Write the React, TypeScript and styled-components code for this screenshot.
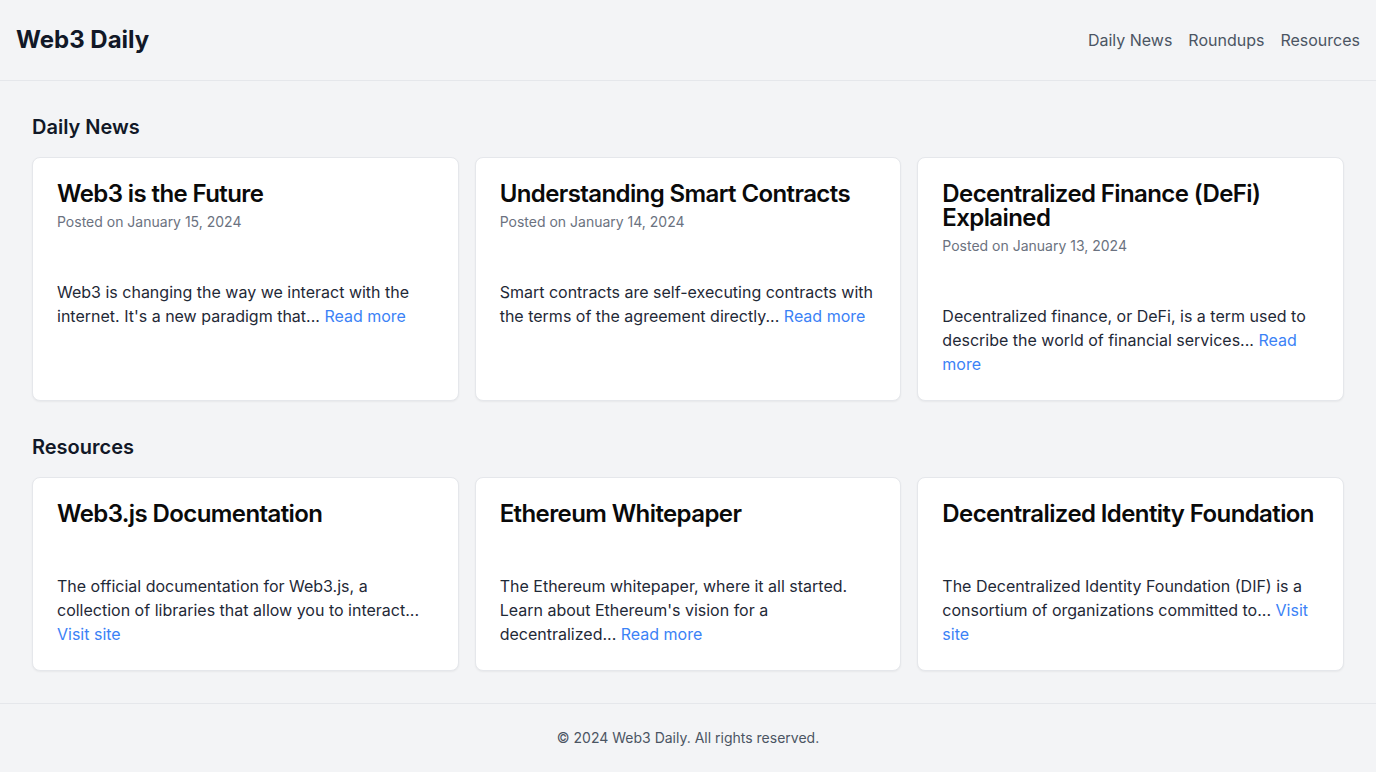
import React from "react";
import styled, { createGlobalStyle } from "styled-components";

const GlobalStyle = createGlobalStyle`
  * { box-sizing: border-box; }
  html, body { margin: 0; padding: 0; }
  body {
    background: #f3f4f6;
    font-family: Inter, "Noto Sans", "Liberation Sans", sans-serif;
    color: #1f2937;
  }
`;

const Page = styled.div`
  min-height: 100vh;
  display: flex;
  flex-direction: column;
`;

const Header = styled.header`
  height: 81px;
  display: flex;
  align-items: center;
  justify-content: space-between;
  padding: 0 16px;
  border-bottom: 1px solid #e5e7eb;
`;

const Brand = styled.h1`
  margin: 0;
  font-size: 24px;
  line-height: 32px;
  font-weight: 700;
  color: #111827;
`;

const Nav = styled.nav`
  display: flex;
  gap: 16px;
`;

const NavLink = styled.a`
  font-size: 16px;
  line-height: 24px;
  color: #4b5563;
  text-decoration: none;
`;

const Main = styled.main`
  flex: 1;
  padding: 32px;
  display: flex;
  flex-direction: column;
  gap: 32px;
`;

const Section = styled.section`
  display: flex;
  flex-direction: column;
`;

const SectionTitle = styled.h2`
  margin: 0 0 16px;
  font-size: 20px;
  line-height: 28px;
  font-weight: 600;
  color: #111827;
`;

const Grid = styled.div`
  display: grid;
  grid-template-columns: repeat(3, 1fr);
  gap: 16px;
`;

const Card = styled.article`
  background: #ffffff;
  border: 1px solid #e5e7eb;
  border-radius: 8px;
  box-shadow: 0 1px 2px rgba(0, 0, 0, 0.05);
  padding: 24px;
  display: flex;
  flex-direction: column;
`;

const CardHeader = styled.div`
  display: flex;
  flex-direction: column;
  gap: 6px;
`;

const CardTitle = styled.h3`
  margin: 0;
  font-size: 24px;
  line-height: 24px;
  font-weight: 600;
  letter-spacing: -0.6px;
  color: #0a0a0a;
`;

const CardDate = styled.p`
  margin: 0;
  font-size: 14px;
  line-height: 20px;
  color: #6b7280;
`;

const CardBody = styled.p`
  margin: 48px 0 0;
  font-size: 16px;
  line-height: 24px;
  color: #1f2937;
`;

const MoreLink = styled.a`
  color: #3b82f6;
  text-decoration: none;
`;

const Footer = styled.footer`
  border-top: 1px solid #e5e7eb;
  padding: 24px 16px;
  text-align: center;
  font-size: 14px;
  line-height: 20px;
  color: #4b5563;
`;

type Item = { title: string; date?: string; text: string; link: string };

const news: Item[] = [
  {
    title: "Web3 is the Future",
    date: "Posted on January 15, 2024",
    text: "Web3 is changing the way we interact with the internet. It's a new paradigm that...",
    link: "Read more",
  },
  {
    title: "Understanding Smart Contracts",
    date: "Posted on January 14, 2024",
    text: "Smart contracts are self-executing contracts with the terms of the agreement directly...",
    link: "Read more",
  },
  {
    title: "Decentralized Finance (DeFi) Explained",
    date: "Posted on January 13, 2024",
    text: "Decentralized finance, or DeFi, is a term used to describe the world of financial services...",
    link: "Read more",
  },
];

const resources: Item[] = [
  {
    title: "Web3.js Documentation",
    text: "The official documentation for Web3.js, a collection of libraries that allow you to interact...",
    link: "Visit site",
  },
  {
    title: "Ethereum Whitepaper",
    text: "The Ethereum whitepaper, where it all started. Learn about Ethereum's vision for a decentralized...",
    link: "Read more",
  },
  {
    title: "Decentralized Identity Foundation",
    text: "The Decentralized Identity Foundation (DIF) is a consortium of organizations committed to...",
    link: "Visit site",
  },
];

const ItemCard = ({ item }: { item: Item }) => (
  <Card>
    <CardHeader>
      <CardTitle>{item.title}</CardTitle>
      {item.date && <CardDate>{item.date}</CardDate>}
    </CardHeader>
    <CardBody>
      {item.text} <MoreLink href="#">{item.link}</MoreLink>
    </CardBody>
  </Card>
);

export default function App() {
  return (
    <Page>
      <GlobalStyle />
      <Header>
        <Brand>Web3 Daily</Brand>
        <Nav>
          <NavLink href="#">Daily News</NavLink>
          <NavLink href="#">Roundups</NavLink>
          <NavLink href="#">Resources</NavLink>
        </Nav>
      </Header>
      <Main>
        <Section>
          <SectionTitle>Daily News</SectionTitle>
          <Grid>
            {news.map((n) => (
              <ItemCard key={n.title} item={n} />
            ))}
          </Grid>
        </Section>
        <Section>
          <SectionTitle>Resources</SectionTitle>
          <Grid>
            {resources.map((r) => (
              <ItemCard key={r.title} item={r} />
            ))}
          </Grid>
        </Section>
      </Main>
      <Footer>© 2024 Web3 Daily. All rights reserved.</Footer>
    </Page>
  );
}
